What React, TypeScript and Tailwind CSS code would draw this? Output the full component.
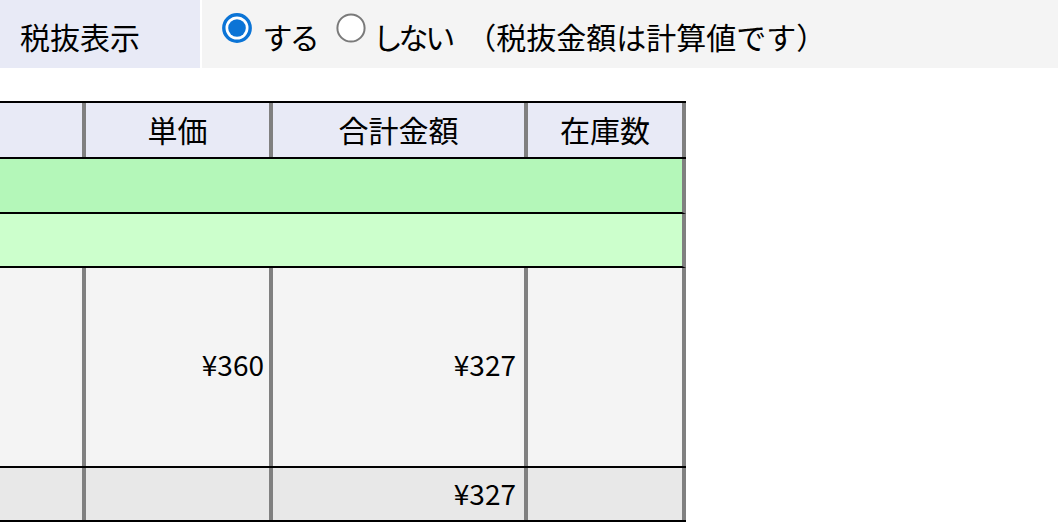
import React from "react";

const font = { fontFamily: '"Noto Sans CJK JP", "Noto Sans", sans-serif' };

function RadioOn() {
  return (
    <svg width="30" height="30" viewBox="0 0 30 30" className="shrink-0">
      <circle cx="15" cy="15" r="13.2" fill="#ffffff" stroke="#0b74d6" strokeWidth="3.4" />
      <circle cx="15" cy="15" r="8.8" fill="#0b74d6" />
    </svg>
  );
}

function RadioOff() {
  return (
    <svg width="30" height="30" viewBox="0 0 30 30" className="shrink-0">
      <circle cx="15" cy="15" r="13.6" fill="#ffffff" stroke="#7a7a7a" strokeWidth="2" />
    </svg>
  );
}

export default function App() {
  return (
    <div className="w-[1058px] h-[522px] overflow-hidden bg-white text-black" style={font}>
      {/* top option bar */}
      <div className="flex h-[68px] gap-[2px]">
        <div className="w-[200px] bg-[#e8eaf6] flex items-center pl-[20px] pt-[4px] text-[30px] leading-none">
          税抜表示
        </div>
        <div className="flex-1 bg-[#f4f4f4] flex items-center pl-[20px] text-[30px] leading-none">
          <div className="mb-[12px]"><RadioOn /></div>
          <span className="ml-[12px] pt-[4px] [font-feature-settings:'palt']">する</span>
          <div className="ml-[18px] mb-[12px]"><RadioOff /></div>
          <span className="ml-[9px] pt-[4px] tracking-[-2px] [font-feature-settings:'palt']">しない</span>
          <span className="ml-[14px] pt-[4px]">（税抜金額は計算値です）</span>
        </div>
      </div>

      {/* table */}
      <div className="mt-[33px] w-[686px] border-t-2 border-black text-[30px] leading-none">
        <div className="flex h-[56px] bg-[#e8eaf6] border-b-2 border-black">
          <div className="w-[86px] border-r-4 border-[#808080]" />
          <div className="w-[187px] border-r-4 border-[#808080] flex items-center justify-center pb-[3px]">単価</div>
          <div className="w-[255px] border-r-4 border-[#808080] flex items-center justify-center pb-[3px]">合計金額</div>
          <div className="w-[158px] border-r-4 border-[#808080] flex items-center justify-center pb-[3px]">在庫数</div>
        </div>
        <div className="h-[55px] bg-[#b4f7b9] border-b-2 border-r-4 border-b-black border-r-[#808080]" />
        <div className="h-[54px] bg-[#ccffcc] border-b-2 border-r-4 border-b-black border-r-[#808080]" />
        <div className="flex h-[200px] bg-[#f4f4f4] border-b-2 border-black text-[28px]">
          <div className="w-[86px] border-r-4 border-[#808080]" />
          <div className="w-[187px] border-r-4 border-[#808080] flex items-center justify-end pr-[5px] pb-[6px]">¥360</div>
          <div className="w-[255px] border-r-4 border-[#808080] flex items-center justify-end pr-[8px] pb-[6px]">¥327</div>
          <div className="w-[158px] border-r-4 border-[#808080]" />
        </div>
        <div className="flex h-[54px] bg-[#e8e8e8] border-b-2 border-black text-[28px]">
          <div className="w-[86px] border-r-4 border-[#808080]" />
          <div className="w-[187px] border-r-4 border-[#808080]" />
          <div className="w-[255px] border-r-4 border-[#808080] flex items-center justify-end pr-[8px] pb-[2px]">¥327</div>
          <div className="w-[158px] border-r-4 border-[#808080]" />
        </div>
      </div>
    </div>
  );
}
